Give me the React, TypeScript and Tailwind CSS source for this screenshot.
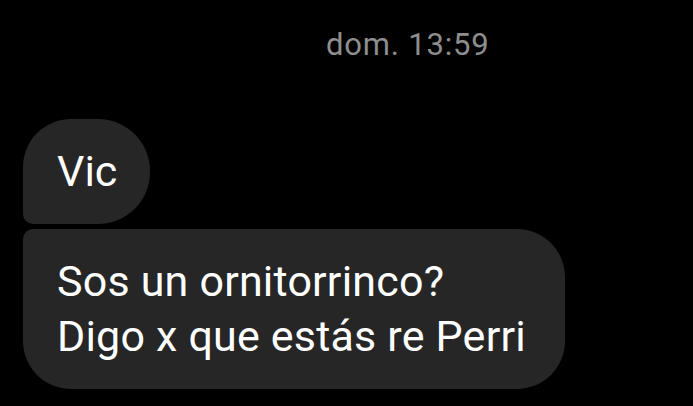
export default function App() {
  return (
    <div className="w-[693px] h-[406px] bg-black overflow-hidden font-['Roboto',sans-serif]">
      {/* Timestamp */}
      <div className="pt-[27px] pl-[326px] text-[31px] leading-[36px] tracking-[0.8px] text-[#8e8e8e]">dom. 13:59</div>

      {/* Message group */}
      <div className="mt-[56px] pl-[23px] flex flex-col items-start gap-[5px]">
        <div className="h-[105px] w-[127px] flex items-center pl-[34px] bg-[#262626] rounded-tl-[48px] rounded-tr-[52px] rounded-br-[52px] rounded-bl-[10px] text-white text-[43px] leading-[55px]">
          Vic
        </div>
        <div className="w-[542px] h-[160px] flex flex-col justify-center pl-[34px] bg-[#262626] rounded-tl-[10px] rounded-tr-[48px] rounded-br-[48px] rounded-bl-[48px] text-white text-[43px] leading-[55px] tracking-[0.2px]">
          <span>Sos un ornitorrinco?</span>
          <span>Digo x que estás re Perri</span>
        </div>
      </div>
    </div>
  );
}
